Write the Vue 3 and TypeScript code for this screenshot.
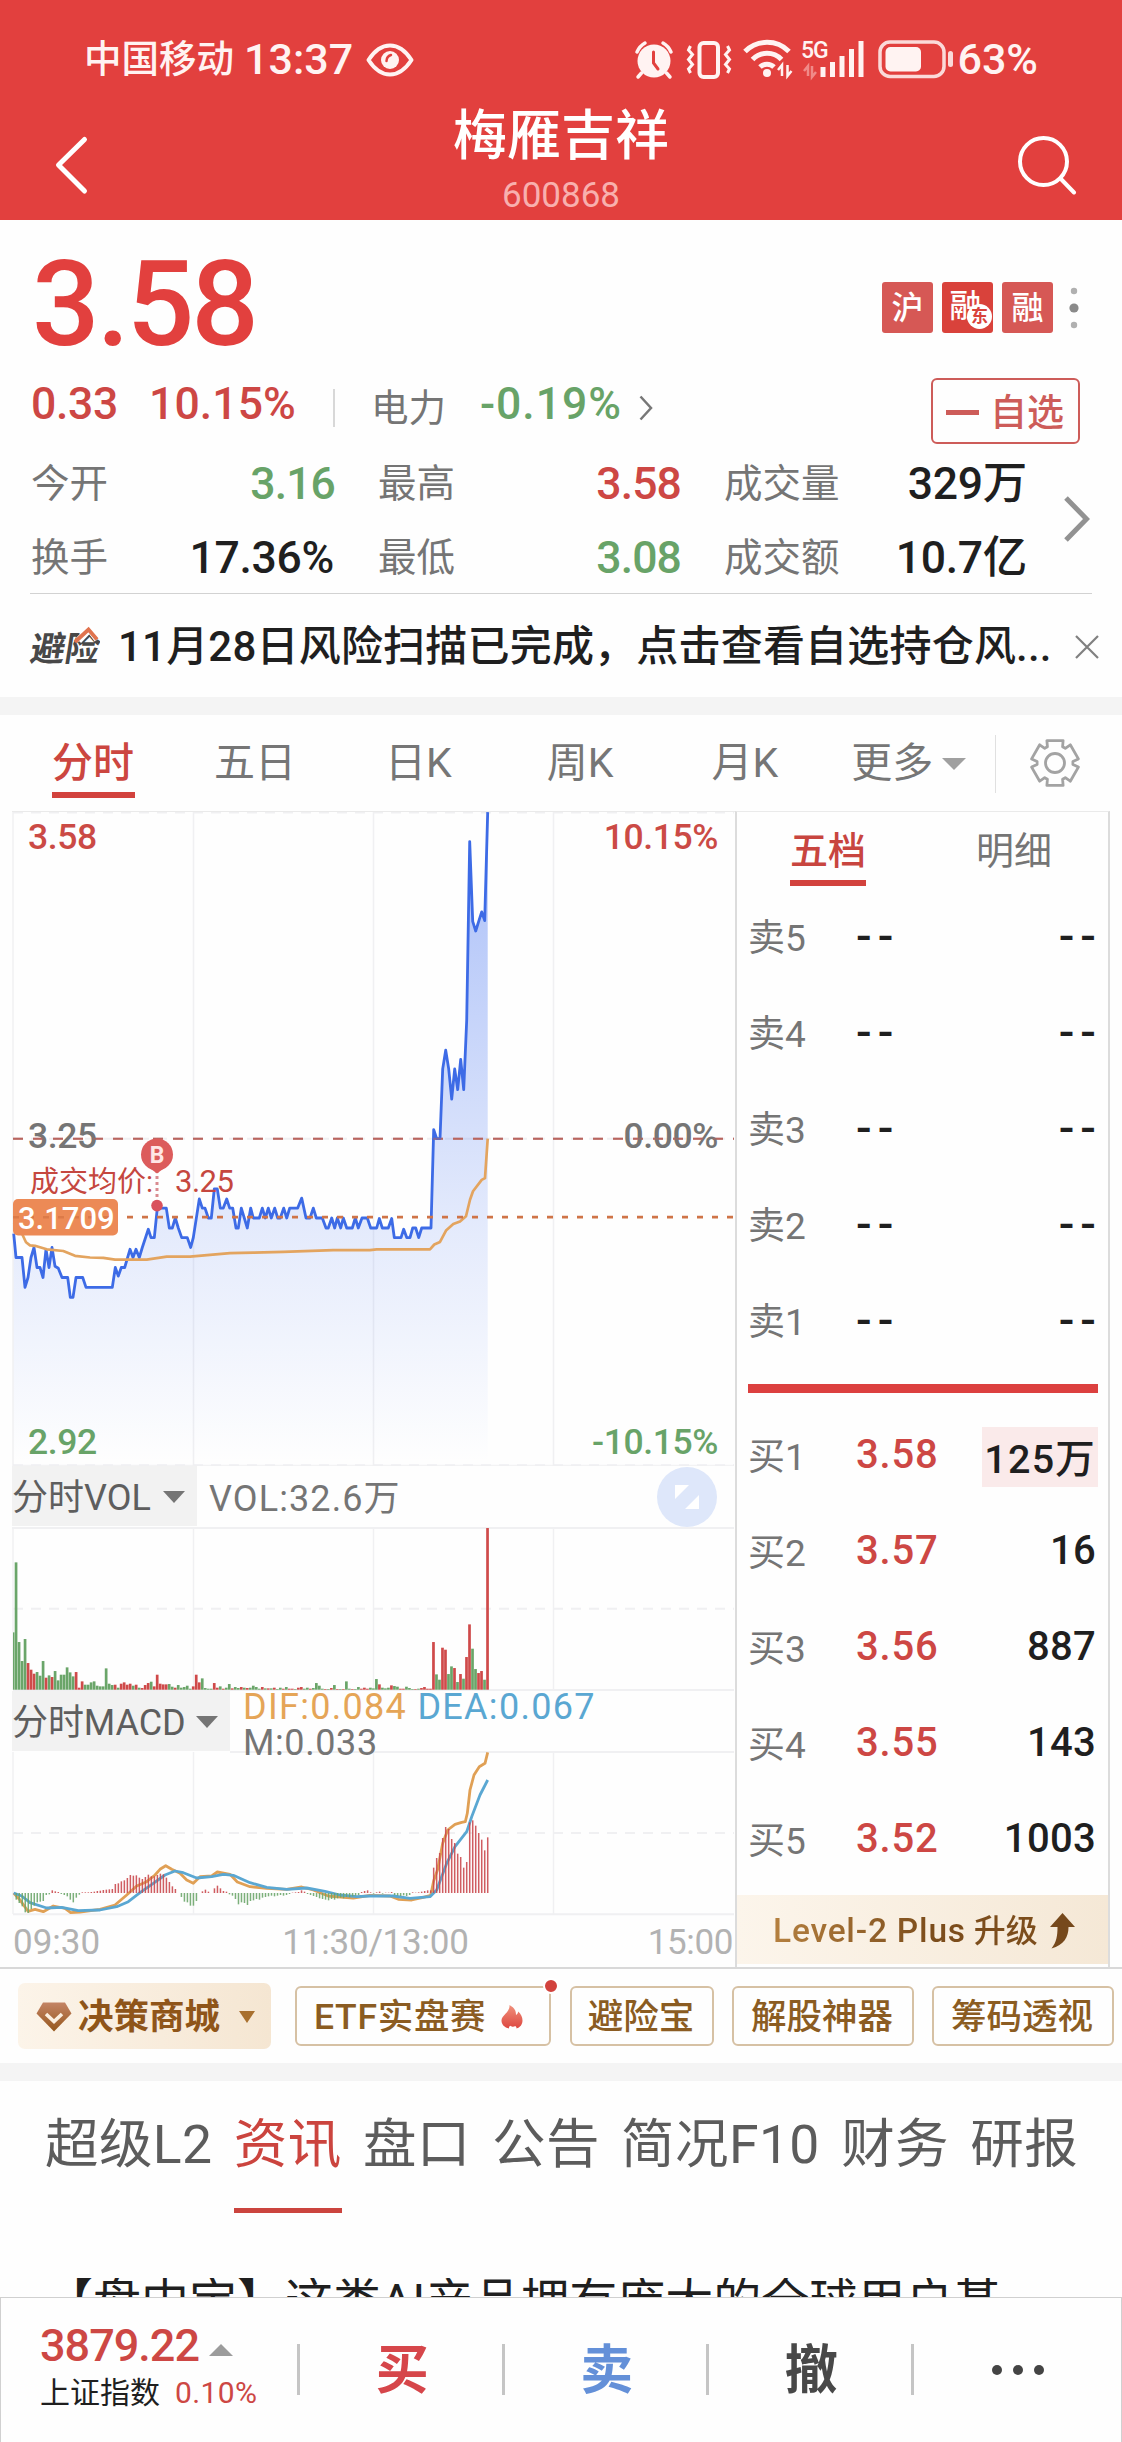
<script setup lang="ts">
type Pt = [number, number]
type Bar = { x: number; w: number; y: number; h: number; up: boolean }

const stats = [
  { label: '今开', value: '3.16', tone: 'green' },
  { label: '最高', value: '3.58', tone: 'red' },
  { label: '成交量', value: '329万', tone: 'ink' },
  { label: '换手', value: '17.36%', tone: 'ink' },
  { label: '最低', value: '3.08', tone: 'green' },
  { label: '成交额', value: '10.7亿', tone: 'ink' },
]

const sells = ['卖5', '卖4', '卖3', '卖2', '卖1']
const buys = [
  { name: '买1', price: '3.58', vol: '125万', hot: true },
  { name: '买2', price: '3.57', vol: '16', hot: false },
  { name: '买3', price: '3.56', vol: '887', hot: false },
  { name: '买4', price: '3.55', vol: '143', hot: false },
  { name: '买5', price: '3.52', vol: '1003', hot: false },
]

const sections = ['超级L2', '资讯', '盘口', '公告', '简况F10', '财务', '研报']

/* Chart series are stored as flat x,y pairs in plot units. */
const pairs = (flat: number[]): Pt[] => {
  const out: Pt[] = []
  for (let i = 0; i < flat.length; i += 2) out.push([flat[i], flat[i + 1]])
  return out
}
const toLine = (pts: Pt[], top: number, sy: number): string =>
  pts.map(([x, y]) => `${(x / 3).toFixed(1)},${(top + y / sy).toFixed(1)}`).join(' ')

const priceRaw = pairs([
  41,1000,48,1055,66,1055,75,1124,84,1101,93,1055,102,1032,111,1078,120,1078,129,1101,138,1036,147,1078,156,1032,165,1075,175,1080,186,1101,203,1101,211,1147,219,1147,228,1101,
  248,1101,258,1124,337,1124,346,1078,355,1098,364,1078,374,1078,390,1036,399,1055,408,1036,418,1055,427,1032,445,990,453,1009,463,1009,472,941,499,941,508,987,517,987,526,964,
  535,987,545,1009,562,1009,572,1032,580,1009,598,920,607,941,615,941,625,964,634,964,643,897,652,897,661,941,670,941,680,920,689,941,698,941,708,987,715,987,724,941,742,987,
  752,941,760,964,778,964,787,941,796,964,805,941,814,964,824,941,833,964,841,964,851,941,860,964,869,941,893,941,905,918,918,964,930,964,940,941,949,964,967,964,978,987,
  985,987,995,964,1004,987,1012,964,1022,987,1030,964,1040,987,1057,987,1066,964,1075,987,1086,964,1102,964,1112,987,1130,987,1138,965,1147,987,1165,987,1175,965,1183,1009,
  1203,1009,1211,990,1220,1009,1230,1009,1238,987,1247,987,1256,1009,1265,987,1293,987,1301,760,1310,781,1320,781,1328,620,1337,577,1346,620,1355,690,1364,620,1373,668,
  1382,598,1391,668,1400,508,1409,96,1418,280,1427,302,1436,280,1445,258,1454,278,1463,28,
])
const avgRaw = pairs([
  41,975,55,985,66,1000,78,1020,90,1027,105,1028,140,1036,190,1040,225,1051,270,1055,310,1056,345,1060,440,1060,500,1053,570,1053,690,1045,760,1044,850,1042,1000,1038,1110,1038,
  1130,1036,1290,1036,1303,1025,1320,1019,1338,993,1360,978,1380,972,1398,960,1410,922,1419,902,1445,876,1455,872,1463,781,
])
const difRaw = pairs([
  41,1299,60,1320,84,1354,105,1348,130,1355,160,1338,195,1345,212,1358,240,1356,300,1348,345,1335,380,1305,410,1278,440,1265,465,1245,480,1228,497,1217,515,1228,540,1240,560,1260,
  580,1270,600,1250,635,1248,652,1236,690,1243,712,1266,750,1280,800,1285,860,1288,905,1281,940,1290,985,1308,1060,1314,1110,1306,1170,1308,1195,1318,1235,1320,1270,1312,
  1292,1306,1301,1262,1313,1228,1328,1150,1343,1110,1365,1093,1385,1087,1396,1085,1402,1060,1410,990,1422,945,1438,920,1455,910,1463,877,
])
const deaRaw = pairs([
  41,1299,65,1308,90,1328,140,1344,185,1342,235,1352,300,1350,350,1340,385,1325,420,1298,460,1270,495,1245,525,1233,550,1238,590,1254,635,1250,670,1243,700,1246,750,1268,800,1282,
  860,1288,920,1284,975,1294,1020,1305,1070,1310,1110,1308,1180,1308,1230,1315,1290,1310,1310,1290,1340,1210,1365,1160,1400,1115,1415,1070,1440,1005,1463,960,
])

const priceLine = toLine(priceRaw, 800, 2.306)
const priceArea = `13.7,1465 ${priceLine} 487.7,1465`
const avgLine = toLine(avgRaw, 800, 2.306)
const difLine = toLine(difRaw, 1460, 3)
const deaLine = toLine(deaRaw, 1460, 3)

/* One entry per minute; negative heights are down-ticks (green). */
const volRaw = [
  -172,-382,-143,-86,-152,80,60,48,-53,-42,-86,36,-43,38,-56,-28,-45,-45,-67,-52,-40,53,6,25,-15,-15,-22,-25,-12,-10,-10,-64,-18,-14,15,-6,18,22,15,18,-12,15,-6,5,14,20,-24,10,45,18,16,16,
  -17,-9,6,-14,-6,-8,-12,-3,10,45,22,-34,-5,-3,-3,20,6,-10,3,-6,-17,4,-8,-5,8,-6,5,-6,-12,-8,-3,8,-4,4,-4,6,-2,-6,3,-8,3,3,-2,6,8,-3,-6,3,-5,-20,-12,-3,2,-2,5,-14,2,-2,2,-25,-3,2,-2,-8,3,6,3,
  -6,-4,-32,16,-6,-4,-6,13,-11,-9,3,3,-9,-5,-2,2,-3,5,8,3,3,143,-46,-30,126,120,-47,-70,65,-23,47,-33,98,196,-123,-62,50,56,-30,485,
]
const macdRaw = [
  0,-20,-30,-40,-58,-60,-48,-38,-28,-26,-24,-6,-4,8,5,3,-3,-6,-10,-20,-28,-14,-5,2,2,2,3,4,6,7,9,10,11,12,27,29,35,38,45,54,52,53,46,42,48,55,50,50,54,58,56,46,33,20,12,0,-12,-26,-28,-38,
  -38,-24,0,5,10,4,0,14,22,14,6,4,-4,-8,-18,-34,-28,-30,-36,-24,-22,-18,-20,-14,-12,-10,-8,-10,-8,-6,-8,-6,-3,1,2,3,8,4,-3,-6,-9,-12,-16,-18,-20,-22,-18,-20,-16,-14,-16,-12,-13,-10,-8,-6,
  3,6,8,2,-2,2,4,-2,1,1,3,-6,-8,-9,-7,-9,-6,2,1,2,4,6,8,8,76,105,120,165,198,192,162,150,118,108,76,93,212,218,202,180,160,128,167,
]
const minuteX = (i: number): number => 13.2 + i * 3.003
const volBars: Bar[] = volRaw.map((v, i) => ({
  x: i === 0 ? 13 : minuteX(i) - 1.5,
  w: i === 0 ? 1.5 : 2.7,
  y: 1689.7 - Math.abs(v) / 3,
  h: Math.abs(v) / 3,
  up: v > 0,
}))
const macdBars: Bar[] = macdRaw.map((v, i) => ({
  x: minuteX(i) - 0.7,
  w: 1.5,
  y: v > 0 ? 1893 - v / 3 : 1893,
  h: Math.abs(v) / 3,
  up: v > 0,
}))

const gridX = [13, 193.5, 373.5, 553.5]

const gearPath = (() => {
  const pts: string[] = []
  for (let k = 0; k < 6; k++) {
    const a = k * 60 - 90
    for (const [d, r] of [[-25, 18], [-20, 23.8], [20, 23.8], [25, 18]]) {
      const t = ((a + d) * Math.PI) / 180
      pts.push(`${(26 + r * Math.cos(t)).toFixed(1)},${(26 + r * Math.sin(t)).toFixed(1)}`)
    }
  }
  return `M${pts.join('L')}Z`
})()
</script>

<template>
  <div class="page">
    <header class="head">
      <div class="status">
        <span class="carrier">中国移动</span>
        <span class="clock">13:37</span>
        <svg class="eye" width="48" height="34" viewBox="0 0 48 34" fill="none" stroke="#fff3f2">
          <path d="M2.5 17C9 7 16 2.500 24 2.500S39 7 45.500 17C39 27 32 31.500 24 31.500S9 27 2.500 17Z" stroke-width="4" stroke-linejoin="round" />
          <circle cx="24" cy="17" r="9" fill="#fff3f2" stroke="none" />
          <path d="M20.500 18c0-3 1.500-5 4.500-6" stroke="#e2403e" stroke-width="2.500" stroke-linecap="round" />
        </svg>
        <svg class="sysicons" width="320" height="42" viewBox="634 38 320 42" fill="none" stroke="#fff3f2">
          <g stroke-linecap="round">
            <circle cx="654" cy="60" r="16.500" fill="#fff3f2" stroke="none" />
            <path d="M637 51a19 19 0 0 1 8-9M671 51a19 19 0 0 0-8-9M641.500 72l-3.500 4M666.500 72l3.500 4" stroke-width="3.500" />
            <path d="M653.500 51v11l4.500 6" stroke="#e2403e" stroke-width="3" />
          </g>
          <rect x="699.500" y="42" width="18.500" height="34" rx="4" stroke-width="4" />
          <path d="M690.500 45l-2 4 4 4.500-4 5 4 5-4 4.500 2 4M727.500 45l2 4-4 4.500 4 5-4 5 4 4.500-2 4" stroke-width="3" />
          <g stroke-width="5">
            <path d="M745 50.500a31 31 0 0 1 44 0M752.500 58.500a20 20 0 0 1 29 0" />
            <path d="M760 66a10 10 0 0 1 14 0" />
          </g>
          <circle cx="767" cy="72" r="4" fill="#fff3f2" stroke="none" />
          <path d="M782 75V64l-4 5M787.500 64v11l4-5" stroke-width="2.500" />
          <text x="801" y="56.500" class="sig">5G</text>
          <path d="M808 75V65l-4 5M812 65v11l4-5" stroke="#f08a88" stroke-width="2.500" />
          <path d="M823 76V66M832.500 76V61M842 76V55M851.500 76V48M861 76V40" stroke-width="5" />
          <rect x="880" y="41" width="64" height="34.500" rx="10" stroke-width="3.500" stroke="#fbdad9" />
          <rect x="885.500" y="46" width="35.500" height="24.500" rx="5" fill="#fff3f2" stroke="none" />
          <path d="M950.500 52.500v11" stroke="#fbdad9" stroke-width="5" stroke-linecap="round" />
        </svg>
        <span class="clock">63%</span>
      </div>
      <div class="titlebar">
        <svg width="36" height="60" viewBox="54 136 36 60" fill="none" stroke="#fff" stroke-width="5" stroke-linecap="round" stroke-linejoin="round">
          <path d="M84.500 140.500L58.500 166l26 26" />
        </svg>
        <div class="title">
          <h1>梅雁吉祥</h1>
          <p>600868</p>
        </div>
        <svg width="60" height="60" viewBox="1017 134 60 60" fill="none" stroke="#fff" stroke-width="4" stroke-linecap="round">
          <circle cx="1043.500" cy="160.500" r="23.500" /><path d="M1060.500 177.500l13.500 14" />
        </svg>
      </div>
    </header>

    <section class="quote">
      <div class="top">
        <strong class="last">3.58</strong>
        <div class="tags">
          <span class="tag">沪</span>
          <span class="tag deep">融<i>东</i></span>
          <span class="tag">融</span>
          <svg width="14" height="44" viewBox="0 0 14 44">
            <circle cx="7" cy="5" r="3.200" fill="#b0b0b0" /><circle cx="7" cy="22" r="4.600" fill="#8a8a8a" /><circle cx="7" cy="39" r="3.200" fill="#b0b0b0" />
          </svg>
        </div>
      </div>
      <div class="change">
        <span class="num red">0.33</span>
        <span class="num red pct">10.15%</span>
        <span class="bar"></span>
        <span class="sector">电力</span>
        <span class="num green idx">-0.19%</span>
        <svg class="mini" width="14" height="26" viewBox="0 0 14 26" fill="none" stroke="#777" stroke-width="2.500"><path d="M1.500 1.500L12 13 1.500 24.500" /></svg>
        <button class="fav"><b></b>自选</button>
      </div>
      <div class="stats">
        <div v-for="s in stats" :key="s.label" class="stat">
          <span class="lab">{{ s.label }}</span>
          <span class="num" :class="s.tone">{{ s.value }}</span>
        </div>
        <svg class="more" width="28" height="46" viewBox="0 0 28 46" fill="none" stroke="#929292" stroke-width="5"><path d="M3 2l20.500 21L3 44" /></svg>
      </div>
      <div class="notice">
        <svg width="72" height="44" viewBox="29 625 72 44">
          <text x="0" y="0" transform="translate(30 662) skewX(-9)" class="brand">避险</text>
          <path d="M79.500 641.500L90.500 630l8 10.500" fill="none" stroke="#fff" stroke-width="7" />
          <path d="M76 643L89.500 630.500l8.500 10" fill="none" stroke="#e0734e" stroke-width="3.800" />
        </svg>
        <p>11月28日风险扫描已完成，点击查看自选持仓风...</p>
        <svg width="24" height="24" viewBox="0 0 24 24" stroke="#808080" stroke-width="2.200"><path d="M1 1l22 22M23 1L1 23" /></svg>
      </div>
    </section>

    <div class="band"></div>

    <nav class="periods">
      <span class="period on">分时</span>
      <span class="period p2">五日</span>
      <span class="period p3">日K</span>
      <span class="period p4">周K</span>
      <span class="period p5">月K</span>
      <span class="period p6">更多<i></i></span>
      <b class="split"></b>
      <svg width="52" height="52" viewBox="0 0 52 52" fill="none" stroke="#a3a3a3" stroke-width="2.800" stroke-linejoin="round">
        <path :d="gearPath" /><circle cx="26" cy="26" r="9.500" />
      </svg>
    </nav>

    <section class="board">
      <div class="charts">
        <svg width="735" height="655" viewBox="0 811 735 655">
          <defs>
            <linearGradient id="fade" gradientUnits="userSpaceOnUse" x1="0" y1="812" x2="0" y2="1462">
              <stop offset="0" stop-color="#3d6df0" stop-opacity=".44" />
              <stop offset=".65" stop-color="#3d6df0" stop-opacity=".13" />
              <stop offset="1" stop-color="#3d6df0" stop-opacity="0" />
            </linearGradient>
          </defs>
          <g stroke="#f0f0f2" stroke-width="1.500">
            <path v-for="x in gridX" :key="x" :d="`M${x} 812V1466`" />
            <path d="M13 812.500H734M13 1138.700H734M13 1465.300H734" stroke-dasharray="10 8" stroke-width="2" />
          </g>
          <path d="M12 811.500H735" stroke="#eaeaea" />
          <path d="M13 1465.300H734" stroke="#f0f0f2" />
          <polygon :points="priceArea" fill="url(#fade)" />
          <path d="M13 1138.700H734" stroke="#b9655f" stroke-width="2" stroke-dasharray="10 10" />
          <text x="28" y="849" class="t36 fr">3.58</text>
          <text x="718" y="849" class="t36 fr end">10.15%</text>
          <text x="28" y="1148" class="t36 fk">3.25</text>
          <text x="718" y="1148" class="t36 fk end">0.00%</text>
          <text x="28" y="1454" class="t36 fg">2.92</text>
          <text x="718" y="1454" class="t36 fg end">-10.15%</text>
          <polyline :points="priceLine" fill="none" stroke="#3d6be6" stroke-width="2.800" stroke-linejoin="round" />
          <polyline :points="avgLine" fill="none" stroke="#e3a45f" stroke-width="2.700" stroke-linejoin="round" />
          <path d="M13 1138.700H734" stroke="#b9655f" stroke-width="2" stroke-dasharray="10 10" opacity=".5" />
          <path d="M13 1217.200H734" stroke="#cf7447" stroke-width="2.800" stroke-dasharray="6 9" stroke-dashoffset="6" />
          <text x="30" y="1192" class="deal">成交均价:</text>
          <text x="175" y="1192" class="dealnum">3.25</text>
          <path d="M157 1170V1201" stroke="#d98b90" stroke-width="3" stroke-dasharray="3 3" />
          <circle cx="157" cy="1205.600" r="5.800" fill="#d9515c" />
          <path d="M157 1173.500l-8-6h16z" fill="#dc5c5c" /><circle cx="157" cy="1154.500" r="16" fill="#dc5c5c" />
          <text x="157" y="1162.800" class="mark">B</text>
          <rect x="13" y="1199" width="105" height="36.500" rx="5" fill="#ec8a56" />
          <path d="M13 1217.200H118" stroke="#dc7a48" stroke-width="2.500" stroke-dasharray="6 9" />
          <text x="18" y="1228.500" class="badge">3.1709</text>
        </svg>

        <div class="ind">
          <span class="pick vol">分时VOL<i></i></span>
          <span class="val v1">VOL:32.6万</span>
          <svg class="zoomer" width="60" height="60" viewBox="0 0 60 60"><circle cx="30" cy="30" r="30" fill="#dee7fa" /><path d="M18 18h14L18 32zM42 28v14H28z" fill="#fff" /></svg>
        </div>
        <svg width="735" height="164" viewBox="0 1527 735 164">
          <g stroke="#f0f0f2" stroke-width="1.500">
            <path v-for="x in gridX" :key="x" :d="`M${x} 1528V1690`" />
            <path d="M13 1608.700H734" stroke-dasharray="10 8" stroke-width="2" />
            <path d="M12 1528H734M13 1690H734" stroke-width="2" />
          </g>
          <rect v-for="(b, i) in volBars" :key="i" :x="b.x" :y="b.y" :width="b.w" :height="b.h" :fill="b.up ? '#cf4a4a' : '#6aa569'" />
        </svg>

        <div class="ind low">
          <span class="pick macd">分时MACD<i></i></span>
          <div class="val two">
            <span class="dif">DIF:0.084</span> <span class="dea">DEA:0.067</span><br />
            <span class="m">M:0.033</span>
          </div>
        </div>
        <svg width="735" height="165" viewBox="0 1751 735 165">
          <g stroke="#f0f0f2" stroke-width="1.500">
            <path v-for="x in gridX" :key="x" :d="`M${x} 1752V1914`" />
            <path d="M13 1833H734" stroke-dasharray="10 8" stroke-width="2" />
            <path d="M230 1752H734M13 1914.200H734" stroke-width="2" />
          </g>
          <polyline :points="difLine" fill="none" stroke="#e0a055" stroke-width="2.800" stroke-linejoin="round" />
          <polyline :points="deaLine" fill="none" stroke="#5aa7d2" stroke-width="2.800" stroke-linejoin="round" />
          <rect v-for="(b, i) in macdBars" :key="i" :x="b.x" :y="b.y" :width="b.w" :height="b.h" :fill="b.up ? '#c9474b' : '#6aa569'" fill-opacity=".88" />
        </svg>
        <div class="times"><span>09:30</span><span>11:30/13:00</span><span>15:00</span></div>
      </div>

      <aside class="depth">
        <div class="dtabs"><span class="on">五档</span><span>明细</span></div>
        <div v-for="s in sells" :key="s" class="drow">
          <span class="dl">{{ s }}</span><span class="dash">--</span><span class="dash last-col">--</span>
        </div>
        <div class="cut"></div>
        <div v-for="b in buys" :key="b.name" class="drow">
          <span class="dl">{{ b.name }}</span><span class="dp">{{ b.price }}</span><span class="dv" :class="{ hot: b.hot }">{{ b.vol }}</span>
        </div>
        <div class="level2">
          <span><u>Level-2 Plus</u> 升级</span>
          <svg width="26" height="36" viewBox="0 0 26 36"><path d="M12.500 0L25 14h-6.500C18.500 24 14 32 1.500 35.500 6.500 29 7.500 23 7.500 14H0z" fill="#76491c" /></svg>
        </div>
      </aside>
    </section>

    <section class="chips">
      <span class="chip shop">
        <svg width="36" height="30" viewBox="0 0 36 30">
          <defs><linearGradient id="gem" x1="0" y1="0" x2="0" y2="1"><stop offset="0" stop-color="#c48465" /><stop offset="1" stop-color="#95571c" /></linearGradient></defs>
          <path d="M7 .5h22L35.500 11.500 18 29.500.5 11.500z" fill="url(#gem)" /><path d="M10 12l8 7.500 8-7.500" fill="none" stroke="#fbefe0" stroke-width="3.600" />
        </svg>
        <em>决策商城</em><i></i>
      </span>
      <span class="chip etf">ETF实盘赛
        <svg width="22" height="24" viewBox="0 0 22 24"><defs><linearGradient id="fire" x1="0" y1="0" x2="0" y2="1"><stop offset="0" stop-color="#f0917c" /><stop offset="1" stop-color="#dd4740" /></linearGradient></defs>
          <path d="M8.500 0C14 3 15 6 15 10c1.500-.8 2-2 2.200-3.500C20 9 21.500 12 21.500 15.500c0 4-2.500 7-6 8 .2-1-.2-2-1.200-2.600-.8.600-1.800.9-2.800.8-1-.2-1.800-.5-2.400-1-1 .8-1.400 1.700-1 2.800C3.500 22.500.5 19.500.5 15.500.5 10 9 7.500 8.500 0Z" fill="url(#fire)" /></svg>
        <b></b>
      </span>
      <span class="chip c3">避险宝</span>
      <span class="chip c4">解股神器</span>
      <span class="chip c4">筹码透视</span>
    </section>

    <div class="band"></div>

    <section class="feed">
      <nav class="sections">
        <span v-for="s in sections" :key="s" :class="{ on: s === '资讯' }">{{ s }}</span>
      </nav>
      <p class="news">【盘中宝】这类AI产品拥有庞大的全球用户基</p>
    </section>

    <footer class="dock">
      <div class="index">
        <div class="i1">3879.22<i></i></div>
        <div class="i2">上证指数<span>0.10%</span></div>
      </div>
      <span class="act buy">买</span>
      <span class="act sell">卖</span>
      <span class="act">撤</span>
      <span class="act dots"><i></i><i></i><i></i></span>
    </footer>
  </div>
</template>

<style>
body { margin: 0; background: #fff; }
</style>

<style scoped>
.page { width: 1122px; height: 2442px; overflow: hidden; background: #fefefe; font-family: Roboto, "Noto Sans CJK SC", sans-serif; line-height: 1; color: #1f1f1f; display: flex; flex-direction: column; }
.page > * { flex: none; }
* { box-sizing: border-box; }
h1, p { margin: 0; font-weight: 400; }
i, em { font-style: normal; }
u { text-decoration: none; }
svg { flex: none; display: block; }
span { white-space: nowrap; }
.red { color: #cd4744; }
.green { color: #68a368; }
.ink { color: #1f1f1f; }

.head { height: 220px; background: #e2403e; color: #fff3f2; }
.status { height: 104px; padding: 15px 84px 0 84px; display: flex; align-items: center; font-weight: 500; }
.carrier { font-size: 37.5px; width: 160px; }
.clock { font-size: 43px; }
.eye { margin-left: 13px; }
.sysicons { margin-left: auto; margin-right: 3px; }
.sig { font: 500 23px Roboto, sans-serif; fill: #fff3f2; stroke: none; letter-spacing: -1px; }
.titlebar { height: 116px; padding: 0 45px 0 54px; display: flex; justify-content: space-between; align-items: flex-start; color: #fff; }
.titlebar > svg { margin-top: 31px; }
.title { text-align: center; margin-left: 15px; padding-top: 6px; }
.title h1 { font-size: 54px; font-weight: 500; height: 62px; }
.title p { font-size: 35px; color: #f8b0ae; line-height: 47px; }

.quote { height: 477px; }
.top { height: 158px; padding: 10px 41px 0 32px; display: flex; justify-content: space-between; align-items: center; }
.last { font-size: 119px; font-weight: 500; color: #e2403e; letter-spacing: -3px; }
.tags { display: flex; gap: 9px; align-items: center; padding-top: 7px; }
.tags svg { margin-left: 5px; }
.tag { position: relative; width: 51px; height: 51px; border-radius: 3px; background: #d65855; color: #fff; font-size: 32px; line-height: 53px; text-align: center; font-weight: 500; }
.tag.deep { background: #d9423b; line-height: 49px; padding-right: 4px; }
.tag.deep i { position: absolute; right: 1px; bottom: 4px; width: 25px; height: 25px; border-radius: 50%; background: #fff; color: #d9423b; font-size: 17px; line-height: 25px; font-weight: 700; }
.change { height: 66px; padding: 0 42px 0 31px; display: flex; align-items: center; }
.num { font-size: 44.500px; font-weight: 500; }
.change .num { padding-bottom: 14px; letter-spacing: -.3px; }
.change .pct { margin-left: 31px; letter-spacing: .1px; }
.bar { width: 2px; height: 38px; margin: 0 0 6px 37px; background: #d8d8d8; }
.sector { font-size: 37.500px; color: #757575; margin: 0 34px 5px 36px; }
.change .idx { letter-spacing: 1px; }
.mini { margin: 0 0 6px 17px; }
.fav { margin-left: auto; width: 149px; height: 66px; border: 2px solid #cd5c59; border-radius: 6px; background: none; padding: 5px 13px 0; display: flex; align-items: center; gap: 11px; font: 500 37px/1 Roboto, "Noto Sans CJK SC", sans-serif; color: #cd5c59; white-space: nowrap; }
.fav b { width: 33px; height: 5px; background: #cd5c59; flex: none; margin-bottom: 3px; }
.stats { position: relative; height: 150px; margin: 0 30px; padding: 3px 0 0 1px; border-bottom: 1px solid #d2d2d2; display: grid; grid-template-columns: 303px 302px 303px; grid-template-rows: 75px 73px; column-gap: 44px; }
.stat { display: flex; justify-content: space-between; align-items: center; }
.stat .num { letter-spacing: -.9px; margin-right: -1px; }
.stat .ink { letter-spacing: -.3px; margin-right: 0; }
.lab { font-size: 38.500px; color: #757575; }
.more { position: absolute; left: 1033px; top: 52px; }
.notice { height: 103px; padding: 3px 23px 0 28px; display: flex; align-items: center; }
.notice p { flex: 1; margin-left: 18px; font-size: 42px; font-weight: 500; letter-spacing: .2px; white-space: nowrap; }
.notice > svg:first-child { margin-bottom: 2px; }
.brand { font: 700 34.500px Roboto, "Noto Sans CJK SC", sans-serif; fill: #484848; }
.band { height: 18px; background: #f4f4f4; }

.periods { height: 96px; padding: 1px 0 0 52px; display: flex; align-items: center; font-size: 41px; color: #767676; }
.periods > svg { margin-bottom: 2px; }
.period { position: relative; }
.period.on { width: 83px; color: #cc4640; font-weight: 500; }
.period.on::after { content: ""; position: absolute; left: 0; top: 49px; width: 83px; height: 6px; background: #d2423d; }
.p2 { margin-left: 79px; }
.p3 { margin-left: 89px; }
.p4 { margin-left: 95px; }
.p5 { margin-left: 98px; }
.p6 { margin-left: 73px; display: flex; align-items: center; }
.p6 i { margin-left: 9px; border: 12px solid transparent; border-top-color: #a0a0a0; border-bottom: 0; }
.split { width: 1px; height: 58px; background: #e0e0e0; margin: 0 33px 0 29px; }

.board { height: 1158px; display: flex; border-bottom: 2px solid #d8d8d8; }
.charts { width: 735px; display: flex; flex-direction: column; }
.t36 { font: 500 35.500px Roboto, sans-serif; letter-spacing: -.4px; }
.end { text-anchor: end; }
.fr { fill: #cb4a45; }
.fk { fill: #757575; }
.fg { fill: #68a368; }
.deal { font: 400 29px Roboto, "Noto Sans CJK SC", sans-serif; fill: #c5473f; }
.dealnum { font: 400 31px Roboto, sans-serif; fill: #c5473f; letter-spacing: -.5px; }
.mark { font: 700 23px Roboto, sans-serif; fill: #ffe6e6; text-anchor: middle; }
.badge { font: 500 31px Roboto, sans-serif; fill: #fff; }
.ind { height: 61px; padding-left: 12px; display: flex; }
.ind.low { height: 60px; }
.pick { height: 60px; background: #f2f2f2; color: #5e5e5e; font-size: 36px; padding-top: 4px; display: flex; align-items: center; }
.pick i { border: 11px solid transparent; border-top: 12px solid #757575; border-bottom: 0; }
.vol { width: 185px; }
.vol i { margin: 0 0 3px 12px; }
.macd { width: 218px; letter-spacing: -.1px; }
.macd i { margin: 0 0 3px 10px; }
.val { font-size: 36px; color: #757575; }
.v1 { margin-left: 12px; line-height: 66px; letter-spacing: 1.1px; }
.zoomer { margin: 1px 18px 0 auto; }
.two { margin-left: 13px; line-height: 36px; margin-top: -2px; letter-spacing: 1.300px; white-space: nowrap; position: relative; }
.dif { color: #e5a557; }
.dea { color: #5aa7d2; }
.m { letter-spacing: .6px; }
.times { height: 53px; padding: 0 2px 0 13px; display: flex; justify-content: space-between; font-size: 35px; line-height: 53px; color: #b2b2b2; }
.times span:nth-child(2) { margin-left: 3px; letter-spacing: -.2px; }
.times span:nth-child(3) { letter-spacing: -.4px; }

.depth { width: 375px; border: solid #dcdcdc; border-width: 0 2px; border-top: 1px solid #eaeaea; }
.dtabs { height: 78px; display: flex; padding-left: 53px; font-size: 38px; line-height: 78px; color: #757575; }
.dtabs span { width: 78px; height: 74px; margin-right: 110px; }
.dtabs .on { color: #c8453f; font-weight: 500; border-bottom: 6px solid #d2423d; }
.drow { height: 96px; padding: 0 11px 0 11px; display: flex; align-items: center; }
.dl { width: 109px; font-size: 37px; color: #757575; padding-top: 1px; }
.dash { font-size: 46px; font-weight: 500; letter-spacing: 6px; padding-bottom: 4px; }
.dash:not(.last-col) { margin-left: -1px; }
.drow .last-col { margin-left: auto; margin-right: -5px; }
.cut { height: 9px; background: #dc403f; margin: 14px 10px 16px 11px; }
.dp { font-size: 40px; font-weight: 500; color: #cd4744; letter-spacing: .8px; padding-bottom: 5px; margin-left: -1px; }
.dv { margin-left: auto; font-size: 40px; font-weight: 500; letter-spacing: .3px; padding: 0 1px 5px 0; }
.dv.hot { width: 116px; height: 60px; margin-right: -1px; background: #faeaea; padding: 4px 2px 0 0; line-height: 58px; text-align: right; font-size: 39.500px; letter-spacing: 1.2px; }
.level2 { height: 69px; margin-top: 6px; display: flex; align-items: center; padding: 2px 0 0 36px; gap: 12px; background: linear-gradient(90deg, #fcf5eb, #f5e8d6); font-size: 32px; font-weight: 500; }
.level2 span { background: linear-gradient(90deg, #b5803f, #7c4d1c 60%); background-clip: text; -webkit-background-clip: text; color: transparent; line-height: 60px; }
.level2 u { font-size: 33.500px; letter-spacing: .8px; }

.chips { height: 94px; padding: 0 0 0 18px; display: flex; align-items: center; }
.chip { position: relative; height: 60px; border: 2px solid #d6c1a4; border-radius: 6px; color: #8b5c22; font-size: 35.500px; font-weight: 500; display: flex; align-items: center; justify-content: center; padding: 3px 2px 0 0; }
.shop { width: 253px; height: 66px; border: 0; border-radius: 7px; background: linear-gradient(90deg, #fcf4e9, #f5e6d2); justify-content: flex-start; padding: 1px 0 0 18px; color: #8f5519; font-weight: 700; }
.shop em { margin-left: 6px; padding-top: 2px; }
.shop i { margin-left: 19px; border: 8px solid transparent; border-top: 12px solid #a8702f; border-bottom: 0; }
.etf { width: 256px; margin-left: 24px; justify-content: flex-start; padding-left: 17px; letter-spacing: .7px; }
.etf svg { margin: -2px 0 0 15px; }
.etf b { position: absolute; right: -10px; top: -10px; width: 16px; height: 16px; border-radius: 50%; background: #d2423d; border: 2px solid #fff; }
.c3 { width: 144px; margin-left: 19px; }
.c4 { width: 182px; margin-left: 18px; }

.feed { height: 216px; }
.sections { height: 132px; padding-left: 45px; display: flex; gap: 21.300px; font-size: 53.500px; letter-spacing: .4px; line-height: 128px; color: #5c5c5c; }
.sections span { height: 132px; }
.sections .on { color: #cb443e; border-bottom: 5px solid #cb443e; }
.news { margin: 65px 0 0 45px; font-size: 48px; height: 19px; line-height: 48px; white-space: nowrap; overflow: hidden; }

.dock { position: relative; height: 145px; border: 1px solid #d0d0d0; border-bottom: 0; background: #fefefe; display: flex; }
.index { width: 296px; padding: 24px 0 0 39px; color: #1f1f1f; }
.i1 { display: flex; align-items: center; font-size: 45px; line-height: 48px; font-weight: 500; color: #cd4744; letter-spacing: -1px; }
.i1 i { margin: 8px 0 0 10px; border: 12px solid transparent; border-bottom-color: #9c9c9c; border-top: 0; }
.i2 { font-size: 30px; line-height: 46px; }
.i2 span { color: #cd4744; margin-left: 15px; letter-spacing: .4px; }
.act { width: 204.500px; display: flex; justify-content: center; align-items: center; font-size: 53px; font-weight: 700; color: #484848; position: relative; padding: 3px 0 0 6px; }
.act::before { content: ""; position: absolute; left: 0; top: 46px; width: 3px; height: 51px; background: #c5c5c5; }
.buy { color: #d6464a; }
.sell { color: #6490d8; }
.dots { gap: 11px; padding-top: 0; padding-left: 10px; }
.dots i { width: 10px; height: 10px; border-radius: 50%; background: #444; }
</style>
